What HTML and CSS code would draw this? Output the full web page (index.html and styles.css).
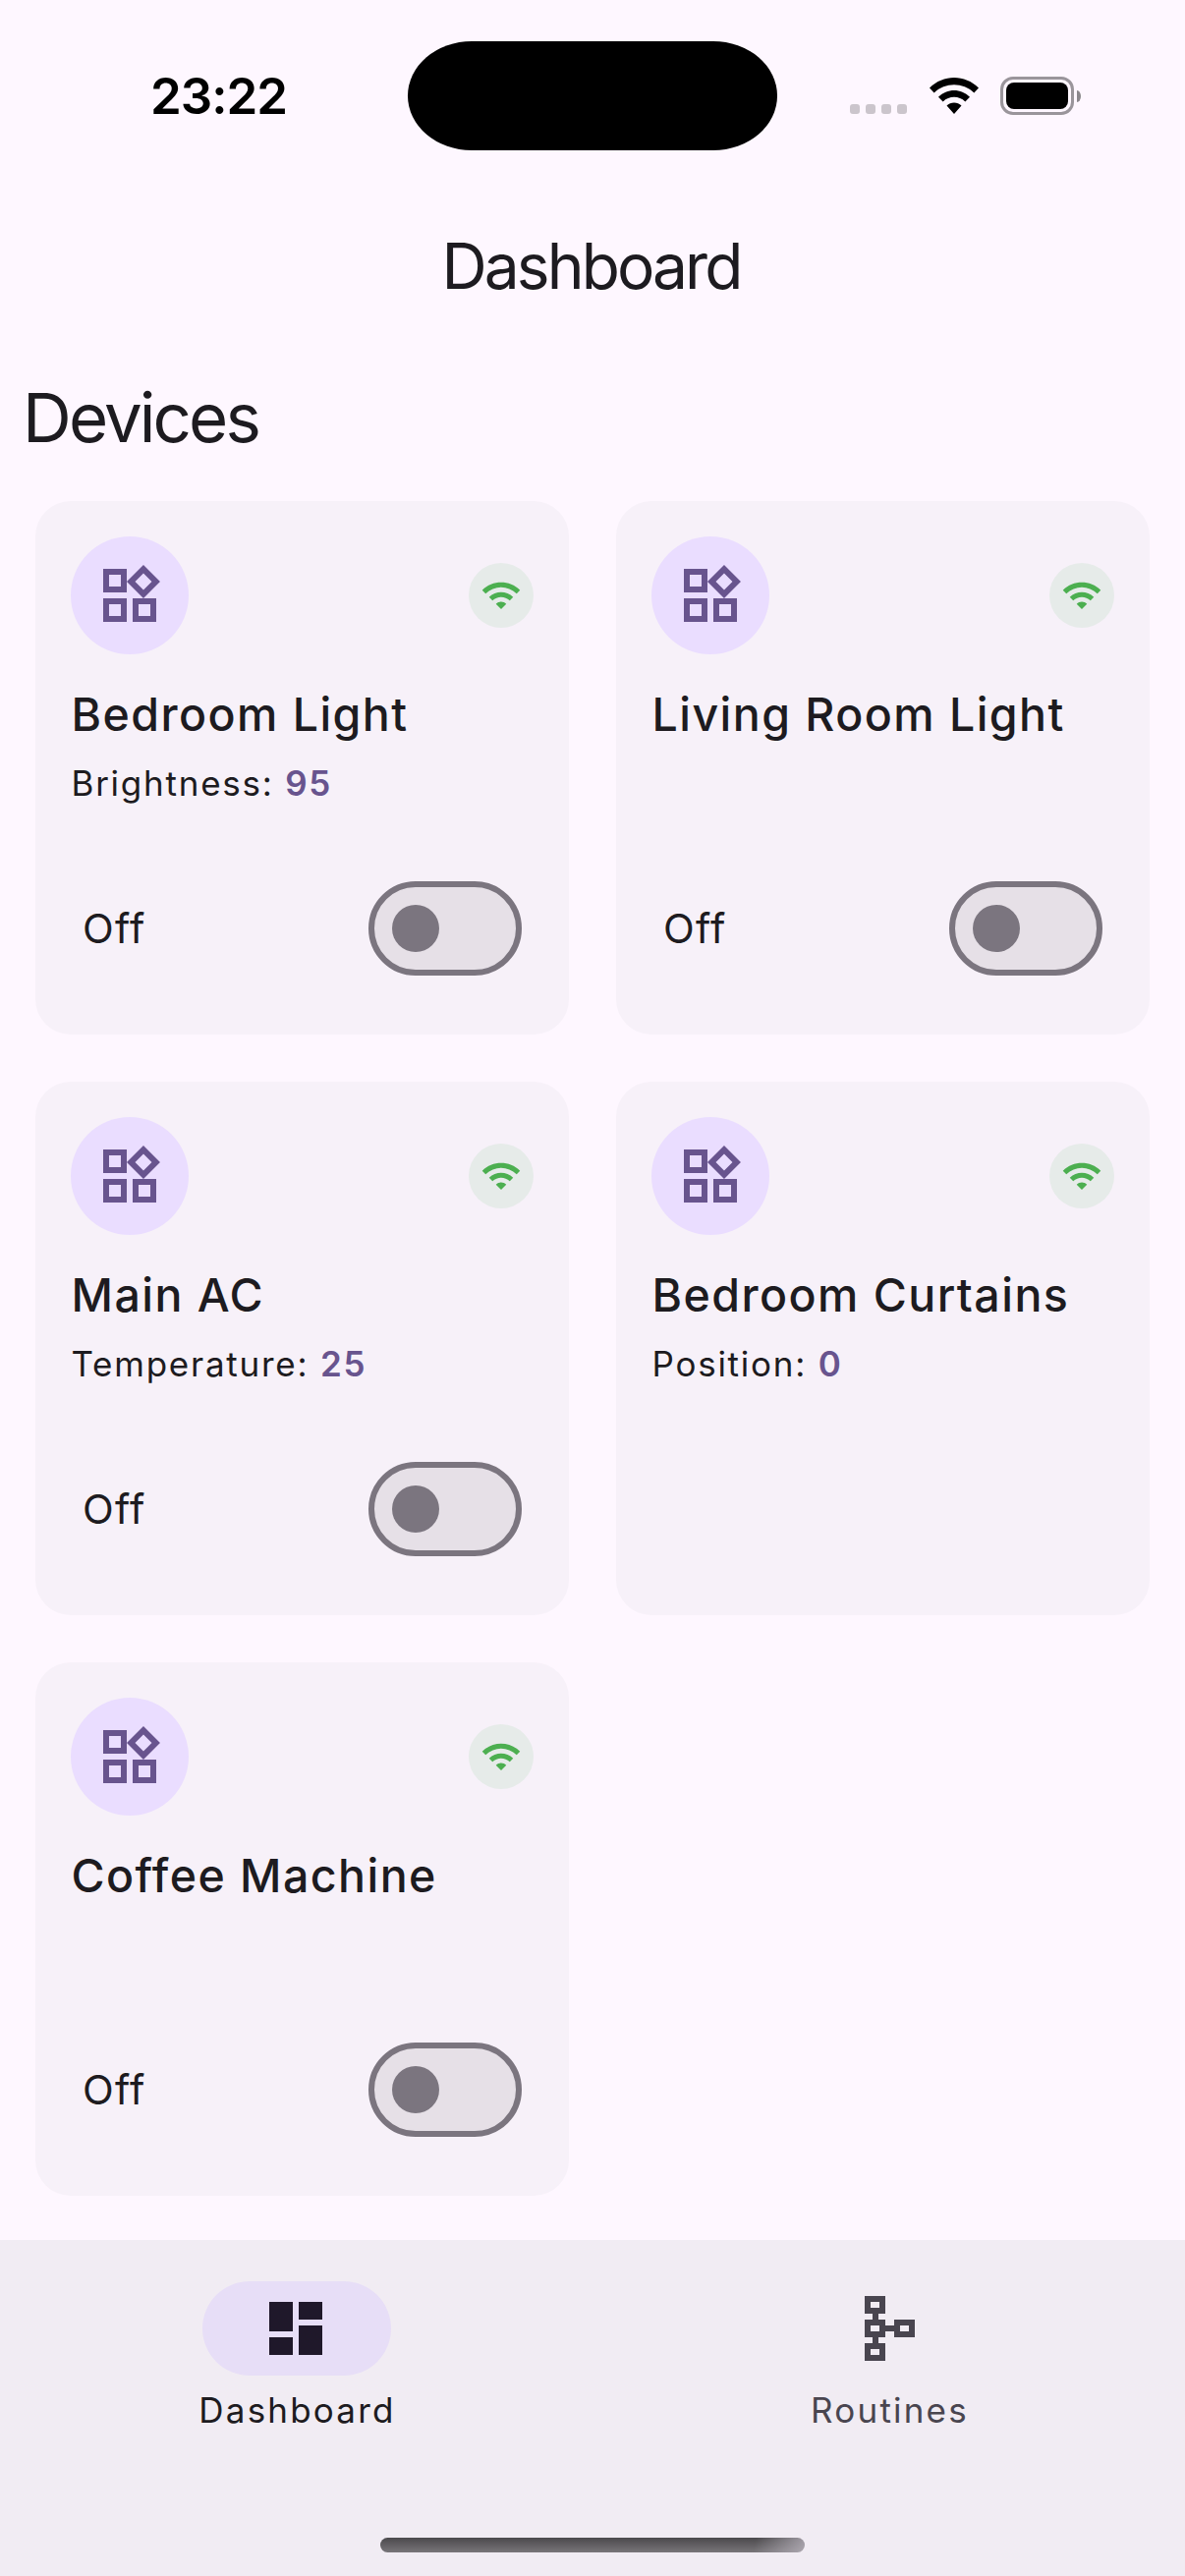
FILE: index.html
```html
<!DOCTYPE html>
<html lang="en">
<head>
<meta charset="utf-8">
<title>Dashboard</title>
<link rel="stylesheet" href="styles.css">
</head>
<body>
<svg class="sprite" aria-hidden="true">
  <symbol id="widgets" viewBox="0 0 24 24"><path d="M16.66 4.52l2.83 2.83-2.83 2.83-2.83-2.83 2.83-2.83M9 5v4H5V5h4m10 10v4h-4v-4h4M9 15v4H5v-4h4m7.66-13.31L11 7.34 16.66 13l5.66-5.66-5.66-5.65zM11 3H3v8h8V3zm10 10h-8v8h8v-8zm-10 0H3v8h8v-8z"/></symbol>
  <symbol id="wifi" viewBox="0 0 24 24"><path d="M1 9l2 2c4.97-4.97 13.03-4.97 18 0l2-2C16.93 2.93 7.08 2.93 1 9zm8 8l3 3 3-3c-1.65-1.66-4.34-1.66-6 0zm-4-4l2 2c2.76-2.76 7.24-2.76 10 0l2-2C15.14 9.14 8.87 9.14 5 13z"/></symbol>
</svg>
<div class="screen">
  <header class="status">
    <div class="status-time"><span class="time">23:22</span></div>
    <div class="island"></div>
    <div class="status-icons">
      <div class="cell"><i></i><i></i><i></i><i></i></div>
      <svg class="status-wifi" viewBox="0 0 50 37"><path d="M0 10.5C14-3.500 36-3.500 50 10.500L45.300 15.400C34 4.500 16 4.500 4.700 15.400ZM9 19.700C18 10.600 32 10.600 41 19.700L36.300 24.500C30 18.300 20 18.300 13.700 24.500ZM17.500 28.600C21.500 24.300 28.500 24.300 32.500 28.600L25 37Z"/></svg>
      <div class="battery"><div class="battery-body"><div class="battery-level"></div></div><div class="battery-nub"></div></div>
    </div>
  </header>
  <div class="appbar"><h1>Dashboard</h1></div>
  <h2 class="section">Devices</h2>
  <main class="grid">
    <article class="card">
      <div class="card-head"><div class="device"><svg><use href="#widgets"/></svg></div><div class="online"><svg><use href="#wifi"/></svg></div></div>
      <h3>Bedroom Light</h3>
      <p class="attr">Brightness: <b>95</b></p>
      <div class="control"><span>Off</span><div class="switch"><i></i></div></div>
    </article>
    <article class="card">
      <div class="card-head"><div class="device"><svg><use href="#widgets"/></svg></div><div class="online"><svg><use href="#wifi"/></svg></div></div>
      <h3>Living Room Light</h3>
      <div class="control"><span>Off</span><div class="switch"><i></i></div></div>
    </article>
    <article class="card">
      <div class="card-head"><div class="device"><svg><use href="#widgets"/></svg></div><div class="online"><svg><use href="#wifi"/></svg></div></div>
      <h3>Main AC</h3>
      <p class="attr">Temperature: <b>25</b></p>
      <div class="control"><span>Off</span><div class="switch"><i></i></div></div>
    </article>
    <article class="card">
      <div class="card-head"><div class="device"><svg><use href="#widgets"/></svg></div><div class="online"><svg><use href="#wifi"/></svg></div></div>
      <h3>Bedroom Curtains</h3>
      <p class="attr">Position: <b>0</b></p>
    </article>
    <article class="card">
      <div class="card-head"><div class="device"><svg><use href="#widgets"/></svg></div><div class="online"><svg><use href="#wifi"/></svg></div></div>
      <h3>Coffee Machine</h3>
      <div class="control"><span>Off</span><div class="switch"><i></i></div></div>
    </article>
  </main>
  <nav class="nav">
    <div class="tabs">
      <div class="tab active">
        <div class="pill"><svg viewBox="0 0 24 24"><path d="M3 3h8v10H3zM3 15h8v6H3zM13 3h8v6h-8zM13 11h8v10h-8z"/></svg></div>
        <span>Dashboard</span>
      </div>
      <div class="tab">
        <div class="pill"><svg viewBox="0 0 24 24"><path fill-rule="evenodd" d="M4 1h7v6H8.500v2H11v2h3V9h7v6h-7v-2h-3v2H8.500v2H11v6H4v-6h2.500v-2H4V9h2.500V7H4zM6 3v2h3V3zM6 11v2h3v-2zM6 19v2h3v-2zM16 11v2h3v-2z"/></svg></div>
        <span>Routines</span>
      </div>
    </div>
    <div class="home"></div>
  </nav>
</div>
</body>
</html>
```
FILE: styles.css
```css
* { box-sizing: border-box; }
body {
  margin: 0;
  background: #fef7ff;
  color: #1d1b20;
  font-family: Inter, "Liberation Sans", sans-serif;
}
h1, h2, h3, p { margin: 0; font-weight: 400; white-space: nowrap; }
svg { display: block; fill: currentColor; }
.sprite { display: none; }
.screen { width: 1206px; height: 2622px; display: flex; flex-direction: column; overflow: hidden; }

.status { height: 186px; display: grid; grid-template-columns: 415px 376px 1fr; align-items: start; color: #000; }
.status-time { padding: 67px 0 0 153px; }
.time { display: block; font-size: 51px; font-weight: 600; line-height: 62px; letter-spacing: -1px; }
.island { height: 111px; margin-top: 41.5px; background: #000; border-radius: 65px / 55.5px; }
.status-icons { display: flex; align-items: flex-start; padding: 78px 0 0 74px; }
.cell { display: flex; gap: 6px; margin-top: 28px; }
.cell i { width: 10px; height: 10px; border-radius: 3px; background: #cbc5cc; }
.status-wifi { width: 50px; height: 37px; margin: 1px 0 0 22.5px; }
.battery { display: flex; align-items: center; gap: 3px; margin-left: 22.5px; }
.battery-body { width: 75px; height: 39px; padding: 3px; border: 3px solid #9a959b; border-radius: 13px; }
.battery-level { height: 100%; border-radius: 8px; background: #000; }
.battery-nub { width: 4px; height: 12px; border-radius: 0 4px 4px 0 / 0 6px 6px 0; background: #8b878c; }

.appbar { height: 168px; display: flex; align-items: center; justify-content: center; padding: 2px 3px 0 0; }
h1 { font-size: 64px; line-height: 84px; letter-spacing: -2.9px; }
.section { height: 156px; padding: 23px 0 0 23px; font-size: 69px; line-height: 96px; letter-spacing: -2.9px; }

.grid { flex: 1; display: grid; grid-template-columns: 543px 543px; grid-auto-rows: 543px; gap: 48px; padding: 0 36px; }
.card { display: flex; flex-direction: column; padding: 36px; background: #f7f1f9; border-radius: 36px; }
.card-head { display: flex; align-items: center; justify-content: space-between; margin-bottom: 25px; }
.device { width: 120px; height: 120px; padding: 24px; border-radius: 50%; background: #eaddff; color: #68548e; }
.device svg { width: 72px; height: 72px; }
.online { width: 66px; height: 66px; padding: 12px; border-radius: 50%; background: #e6ebe9; color: #4caf50; }
.online svg { width: 42px; height: 42px; }
h3 { padding-left: 0.5px; font-size: 46.5px; font-weight: 460; line-height: 72px; letter-spacing: 1.45px; }
.attr { margin-top: 10px; padding-left: 0.5px; font-size: 35px; font-weight: 380; line-height: 48px; letter-spacing: 1.75px; }
.attr b { font-weight: 580; color: #68548e; }
.control { height: 144px; margin-top: auto; padding: 0 12px; display: flex; align-items: center; justify-content: space-between; font-size: 41.5px; font-weight: 440; letter-spacing: 1.3px; }
.switch { width: 156px; height: 96px; display: flex; align-items: center; padding-left: 18px; border: 6px solid #7b757f; border-radius: 48px; background: #e6e0e7; }
.switch i { width: 48px; height: 48px; border-radius: 50%; background: #7b757f; }

.nav { height: 342px; display: flex; flex-direction: column; justify-content: space-between; align-items: center; padding: 42px 0 24px; background: #f1ecf3; }
.tabs { width: 100%; display: flex; }
.tab { flex: 1; display: flex; flex-direction: column; align-items: center; gap: 11px; color: #49454f; font-size: 35px; font-weight: 440; line-height: 48px; letter-spacing: 2.2px; }
.tab span { margin-right: -2px; }
.pill { width: 192px; height: 96px; display: flex; align-items: center; justify-content: center; border-radius: 48px; }
.pill svg { width: 72px; height: 72px; margin-right: 1px; shape-rendering: crispEdges; }
.active { color: #1d1b20; }
.active .pill { background: #e7def7; color: #1f182a; }
.home { width: 432px; height: 15px; border-radius: 8px; background: linear-gradient(100deg, transparent 88%, rgba(190,184,194,.75)), linear-gradient(#4b494c, #787579); }
```
